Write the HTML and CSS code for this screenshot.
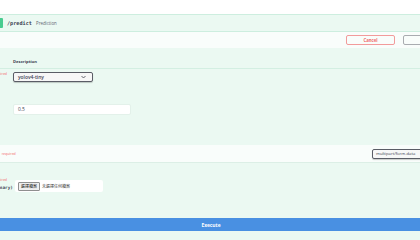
FILE: index.html
```html
<!DOCTYPE html>
<html lang="en">
<head>
    <meta charset="UTF-8">
    <meta name="viewport" content="width=device-width, initial-scale=1.0">
    <title>/predict</title>
    <link rel="stylesheet" href="styles.css">
</head>
<body>

    <div class="page">
        <div class="opblock">
            <div class="summary">
                <span class="method">POST</span>
                <span class="path">/predict</span>
                <span class="summary-desc">Prediction</span>
            </div>

            <div class="section-header">
                <h4 class="section-title">Parameters</h4>
                <div class="try-out">
                    <button class="btn cancel">Cancel</button>
                    <button class="btn reset">Reset</button>
                </div>
            </div>

            <div class="params">
                <div class="params-head">
                    <span>Name</span>
                    <span>Description</span>
                </div>
                <div class="param-row">
                    <div class="param-name">
                        <div class="name-line required">model_name<span class="star">*</span><span class="req">required</span></div>
                        <div class="type-line">string</div>
                        <div class="in-line">(query)</div>
                    </div>
                    <div class="param-value">
                        <div class="select">
                            <span>yolov4-tiny</span>
                            <svg class="chevron" width="5" height="4" viewBox="0 0 10 6"><path d="M1 1l4 4 4-4" fill="none" stroke="#41444e" stroke-width="1.6"/></svg>
                        </div>
                    </div>
                </div>
                <div class="param-row">
                    <div class="param-name">
                        <div class="name-line">threshold</div>
                        <div class="type-line">number</div>
                        <div class="in-line">(query)</div>
                    </div>
                    <div class="param-value">
                        <div class="text-input">0.5</div>
                    </div>
                </div>
            </div>

            <div class="section-header body-header">
                <h4 class="section-title">Request body<span class="req">required</span></h4>
                <div class="select content-type">multipart/form-data</div>
            </div>

            <div class="request-body">
                <div class="param-row file-row">
                    <div class="param-name">
                        <div class="name-line required">file<span class="star">*</span><span class="req">required</span></div>
                        <div class="type-line">string($binary)</div>
                    </div>
                    <div class="param-value">
                        <div class="file-input">
                            <span class="file-btn">選擇檔案</span>
                            <span class="file-text">未選擇任何檔案</span>
                        </div>
                    </div>
                </div>
            </div>

            <div class="execute-wrapper">
                <button class="btn execute">Execute</button>
            </div>
        </div>
    </div>

</body>
</html>
```

FILE: styles.css
```css
body {
    margin: 0;
    font-family: "Open Sans", "Liberation Sans", sans-serif;
    color: #3b4151;
    background-color: #fff;
    overflow: hidden;
}
.page {
    width: 420px;
    height: 240px;
    padding-top: 14px;
    box-sizing: border-box;
    overflow: hidden;
}
.opblock {
    margin-left: -48px;
    width: 518px;
    box-sizing: border-box;
    border: 1px solid #cdeedf;
    background-color: #ebf9f2;
}
.summary {
    display: flex;
    align-items: center;
    padding: 3px;
    border-bottom: 1px solid #cdeedf;
}
.method {
    width: 47px;
    height: 10px;
    border-radius: 1px;
    background-color: #49cc90;
    color: white;
    font-size: 5px;
    font-weight: bold;
    text-align: center;
    line-height: 10px;
}
.path {
    margin-left: 4px;
    font-family: "DejaVu Sans Mono", "Liberation Mono", monospace;
    font-size: 5.2px;
    font-weight: bold;
    color: #3b4151;
}
.summary-desc {
    margin-left: 4px;
    font-size: 4.4px;
    color: #5f6370;
}
.section-header {
    display: flex;
    align-items: center;
    justify-content: space-between;
    height: 16px;
    padding: 0 17px;
    background-color: #f9fdfb;
}
.section-title {
    margin: 0;
    font-size: 4.9px;
    font-weight: bold;
    white-space: nowrap;
}
.try-out {
    display: flex;
    gap: 8px;
}
.btn {
    display: block;
    font-family: "Open Sans", "Liberation Sans", sans-serif;
    font-weight: bold;
    cursor: pointer;
    padding: 0;
}
.cancel, .reset {
    width: 49px;
    height: 10px;
    border-radius: 2px;
    background: transparent;
    font-size: 4.3px;
}
.cancel {
    border: 1px solid #f29b9b;
    color: #ef6b6b;
}
.reset {
    border: 1px solid #a9acb0;
    color: #8a8d93;
}
.params {
    padding: 8px 17px 12px 21px;
}
.params-head {
    display: grid;
    grid-template-columns: 33px 1fr;
    gap: 6px;
    height: 12px;
    line-height: 12px;
    font-size: 4.2px;
    font-weight: bold;
    border-bottom: 1px solid #d3efe2;
}
.param-row {
    display: grid;
    grid-template-columns: 33px 1fr;
    gap: 6px;
    min-height: 26px;
    padding: 3px 0;
}
.param-name {
    font-size: 5px;
    line-height: 6px;
}
.name-line {
    white-space: nowrap;
    font-weight: bold;
}
.name-line.required {
    display: flex;
    justify-content: flex-end;
    align-items: baseline;
}
.star {
    color: red;
}
.req {
    position: relative;
    top: -2px;
    padding-left: 1.5px;
    font-size: 3.5px;
    font-weight: normal;
    color: #f36b6b;
}
.type-line {
    white-space: nowrap;
    font-family: "DejaVu Sans Mono", "Liberation Mono", monospace;
    font-size: 4.3px;
    font-weight: bold;
}
.in-line {
    white-space: nowrap;
    font-size: 4px;
    font-style: italic;
    color: #808080;
}
.select {
    display: flex;
    align-items: center;
    justify-content: space-between;
    width: 80px;
    height: 10px;
    box-sizing: border-box;
    padding: 0 6px 0 4px;
    border: 1px solid #5a5d66;
    border-radius: 2px;
    background-color: #f7f7f7;
    box-shadow: 0 1px 1px rgba(0, 0, 0, 0.2);
    font-size: 4.9px;
    font-weight: 600;
    white-space: nowrap;
}
.text-input {
    width: 118px;
    height: 11px;
    box-sizing: border-box;
    padding-left: 4px;
    border: 1px solid #e3f1ea;
    border-radius: 2px;
    background-color: white;
    font-size: 4.9px;
    line-height: 9px;
}
.body-header {
    height: 18px;
    padding-left: 12px;
    border-bottom: 1px solid #dcefe6;
    box-sizing: border-box;
}
.body-header .req {
    padding-left: 3.5px;
    top: -1px;
}
.content-type {
    padding: 0 3px;
    font-size: 4.2px;
    font-weight: normal;
}
.request-body {
    padding: 15px 17px 14px 21px;
}
.file-row {
    padding: 0;
    min-height: 18px;
}
.file-input {
    display: flex;
    align-items: center;
    width: 88px;
    height: 12px;
    box-sizing: border-box;
    margin: 2px 0 0 2px;
    padding-left: 3px;
    background-color: white;
    border-radius: 2px;
}
.file-btn {
    height: 7px;
    padding: 0 2px;
    border: 1px solid #8f8f8f;
    border-radius: 1px;
    background-color: #efefef;
    color: #222;
    font-family: "Noto Sans CJK TC", sans-serif;
    font-size: 4px;
    line-height: 7px;
}
.file-text {
    margin-left: 2px;
    font-family: "Noto Sans CJK TC", sans-serif;
    font-size: 4px;
    line-height: 7px;
    color: #444;
}
.execute-wrapper {
    padding: 8px 8px 9px;
}
.execute {
    width: 100%;
    height: 13px;
    border: 1px solid #4990e2;
    border-radius: 0;
    background-color: #4990e2;
    color: white;
    font-size: 4.9px;
}
```
